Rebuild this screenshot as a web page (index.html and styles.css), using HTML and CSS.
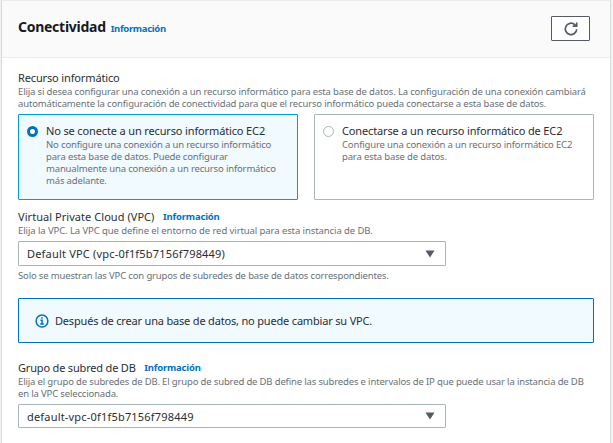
FILE: index.html
```html
<!DOCTYPE html>
<html lang="es">
<head>
<meta charset="utf-8">
<title>Conectividad</title>
<link rel="stylesheet" href="styles.css">
</head>
<body>
<section class="panel">
  <header class="panel-header">
    <h2 class="title">Conectividad</h2>
    <a class="info info-title">Información</a>
    <button class="refresh" aria-label="Actualizar">
      <svg width="16" height="16" viewBox="0 0 16 16" fill="none" stroke="#545b64" stroke-width="1.7"><path d="M13.7 8.2A5.7 5.7 0 1 1 11.7 3.6L13.3 5"/><path d="M13.7 1.4V5.2H9.7"/></svg>
    </button>
  </header>
  <div class="content">
    <div class="field">
      <div class="label"><span class="l-recurso">Recurso informático</span></div>
      <p class="desc">Elija si desea configurar una conexión a un recurso informático para esta base de datos. La configuración de una conexión cambiará<br>automáticamente la configuración de conectividad para que el recurso informático pueda conectarse a esta base de datos.</p>
      <div class="tiles">
        <label class="tile selected">
          <span class="radio"></span>
          <span class="tile-text">
            <span class="tile-title">No se conecte a un recurso informático EC2</span>
            <span class="desc tile-desc">No configure una conexión a un recurso informático<br>para esta base de datos. Puede configurar<br>manualmente una conexión a un recurso informático<br>más adelante.</span>
          </span>
        </label>
        <label class="tile">
          <span class="radio"></span>
          <span class="tile-text">
            <span class="tile-title">Conectarse a un recurso informático de EC2</span>
            <span class="desc tile-desc">Configure una conexión a un recurso informático EC2<br>para esta base de datos.</span>
          </span>
        </label>
      </div>
    </div>
    <div class="field vpc">
      <div class="label"><span class="l-vpc">Virtual Private Cloud (VPC)</span><a class="info">Información</a></div>
      <p class="desc vpc-desc">Elija la VPC. La VPC que define el entorno de red virtual para esta instancia de DB.</p>
      <div class="select"><span>Default VPC (vpc-0f1f5b7156f798449)</span><svg width="10" height="8" viewBox="0 0 10 8"><path d="M.5.5h9L5 7.5z" fill="#545b64"/></svg></div>
      <p class="desc help">Solo se muestran las VPC con grupos de subredes de base de datos correspondientes.</p>
    </div>
    <div class="alert">
      <svg width="14" height="14" viewBox="0 0 14 14" fill="none" stroke="#0073bb" stroke-width="1.5"><circle cx="7" cy="7" r="5.9"/><path d="M5.4 6.3H7.1V10M5.2 10h3.7M6.2 4h1.5"/></svg>
      <span>Después de crear una base de datos, no puede cambiar su VPC.</span>
    </div>
    <div class="field subnet">
      <div class="label"><span class="l-grupo">Grupo de subred de DB</span><a class="info">Información</a></div>
      <p class="desc">Elija el grupo de subredes de DB. El grupo de subred de DB define las subredes e intervalos de IP que puede usar la instancia de DB<br>en la VPC seleccionada.</p>
      <div class="select short"><span>default-vpc-0f1f5b7156f798449</span><svg width="10" height="8" viewBox="0 0 10 8"><path d="M.5.5h9L5 7.5z" fill="#545b64"/></svg></div>
    </div>
  </div>
</section>
</body>
</html>
```
FILE: styles.css
```css
* { box-sizing: border-box; }
body {
  margin: 0;
  height: 443px;
  overflow: hidden;
  background: #f2f3f3;
  font-family: "Noto Sans", "Open Sans", sans-serif;
  font-size: 11px;
  color: #2a2e33;
  white-space: nowrap;
}
.panel {
  width: 610px;
  height: 460px;
  margin-left: 1px;
  background: #fff;
  border: 1px solid #d5dbdb;
  border-top-color: #eaeded;
}
.panel-header {
  display: flex;
  align-items: center;
  height: 57px;
  padding: 0 20px 0 16px;
  background: #fafafa;
  border-bottom: 1px solid #eaeded;
}
.title { margin: 0 5px 4px 0; font-size: 14px; line-height: 20px; font-weight: 700; letter-spacing: -.27px; color: #16191f; }
.info { color: #0073bb; font-size: 9.5px; font-weight: 700; letter-spacing: -.18px; margin-left: 8.5px; }
.info-title { margin: 0 0 2px; letter-spacing: -.32px; }
.refresh {
  display: flex;
  align-items: center;
  justify-content: center;
  width: 39px;
  height: 25px;
  margin: 0 0 1px auto;
  padding: 0;
  background: #fff;
  border: 1px solid #545b64;
  border-radius: 1px;
}
.content { padding: 11px 16px 0; }
.label { display: flex; align-items: center; height: 17px; line-height: 17px; }
.l-recurso { letter-spacing: -.14px; }
.l-vpc { letter-spacing: .05px; }
.l-grupo { letter-spacing: -.18px; }
.desc { display: block; margin: 0; font-size: 9.5px; line-height: 12px; letter-spacing: -.155px; color: #687078; }
.vpc-desc { letter-spacing: -.085px; }
.tiles { display: grid; grid-template-columns: 280px 280px; gap: 16px; margin-top: 4px; }
.tile {
  display: flex;
  height: 86px;
  padding: 9px 8px;
  border: 1px solid #aab7b8;
  border-radius: 1px;
}
.selected { background: #f1faff; border-color: #00a1c9; }
.radio { width: 11px; height: 11px; margin: 2px 8px 0 0; flex: none; border: 1px solid #aab7b8; border-radius: 50%; background: #fff; }
.selected .radio { border: 3px solid #0073bb; }
.tile-title { display: block; line-height: 14px; margin-bottom: 1px; letter-spacing: -.14px; }
.vpc { margin-top: 8px; }
.select {
  display: flex;
  align-items: center;
  justify-content: space-between;
  width: 428px;
  height: 25px;
  margin-top: 4px;
  padding: 0 10px 0 8px;
  border: 1px solid #aab7b8;
  border-radius: 1px;
  letter-spacing: .19px;
}
.short { height: 24px; }
.help { margin-top: 4px; }
.alert {
  display: flex;
  align-items: center;
  gap: 6px;
  height: 45px;
  margin-top: 16px;
  padding-left: 16px;
  background: #f1faff;
  border: 1px solid #0073bb;
  border-radius: 1px;
  letter-spacing: -.18px;
}
.subnet { margin-top: 16px; }
```
